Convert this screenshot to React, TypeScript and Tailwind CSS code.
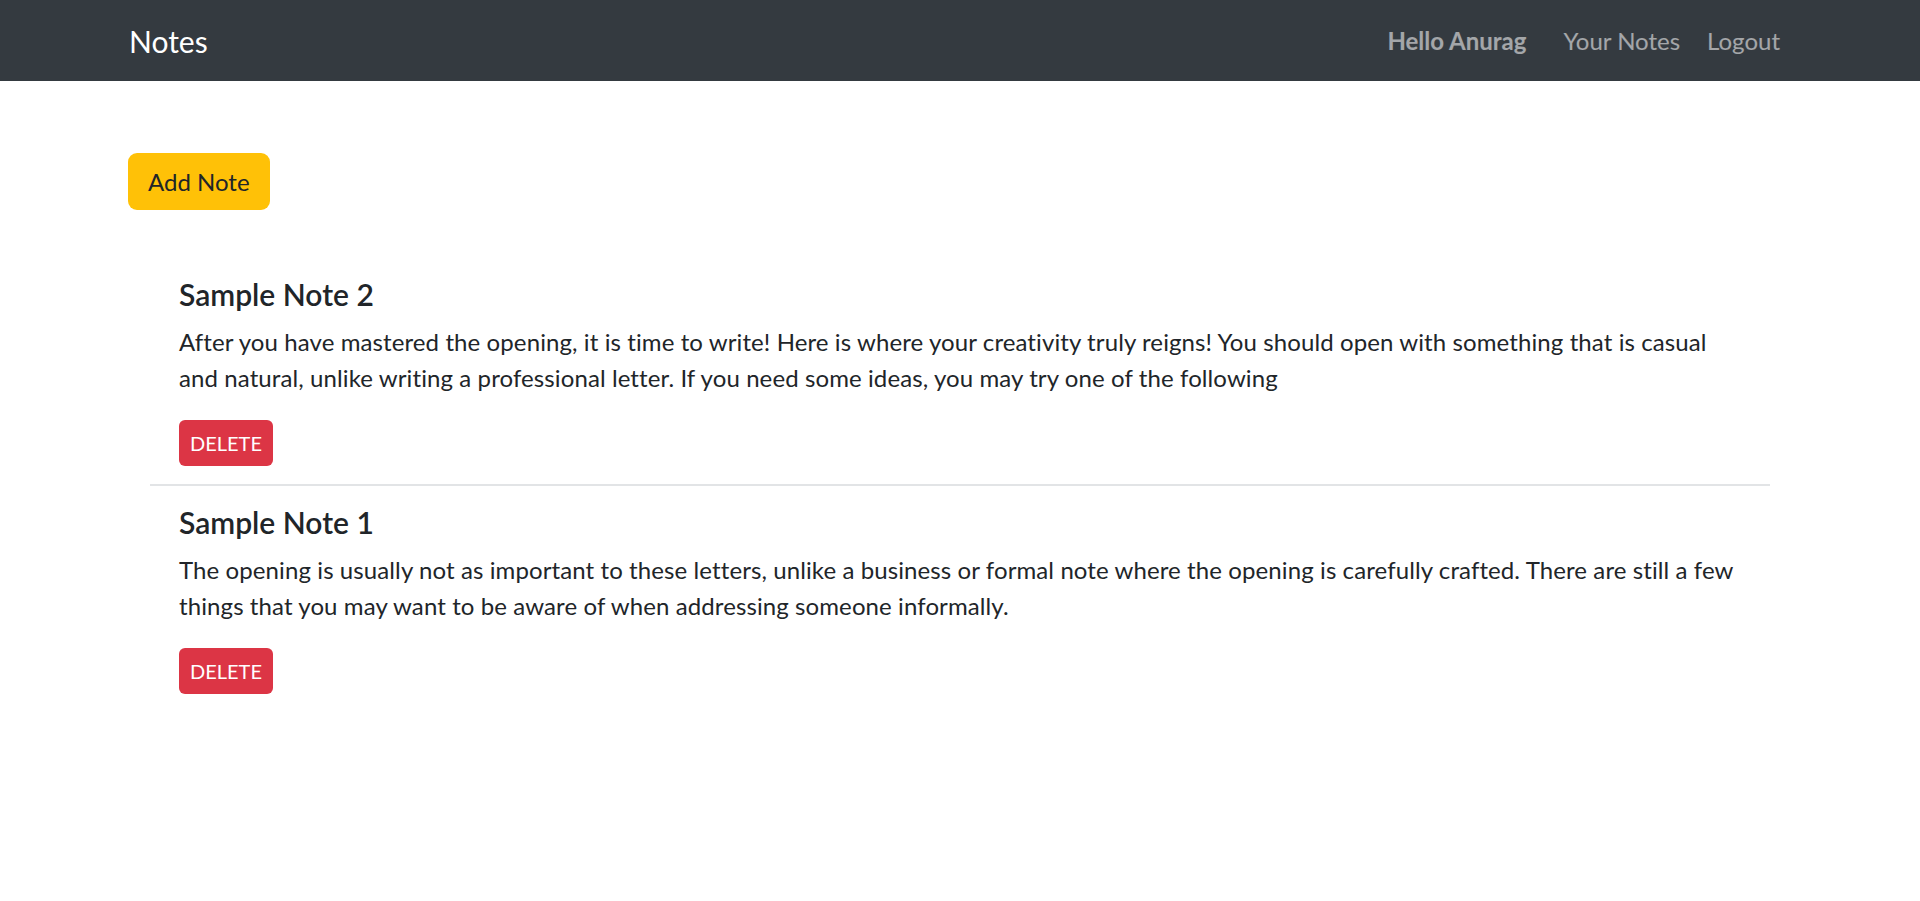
const notes = [
    {
        id: 2,
        title: "Sample Note 2",
        description:
            "After you have mastered the opening, it is time to write! Here is where your creativity truly reigns! You should open with something that is casual and natural, unlike writing a professional letter. If you need some ideas, you may try one of the following",
    },
    {
        id: 1,
        title: "Sample Note 1",
        description:
            "The opening is usually not as important to these letters, unlike a business or formal note where the opening is carefully crafted. There are still a few things that you may want to be aware of when addressing someone informally.",
    },
];

function Navbar() {
    return (
        <nav className="h-[81px] bg-[#343a40]">
            <div className="mx-[128px] h-full flex items-center justify-between">
                <a className="text-[30px] leading-[36px] text-white ml-px">Notes</a>
                <div className="flex items-center text-[24px] leading-[36px] text-white/55">
                    <span className="font-bold mr-[25px]">Hello Anurag</span>
                    <a className="px-3">Your Notes</a>
                    <a className="px-3 ml-[3px]">Logout</a>
                </div>
            </div>
        </nav>
    );
}

export default function App() {
    return (
        <div className="min-h-screen bg-white text-[#212529] font-['Lato','Liberation_Sans',sans-serif]">
            <Navbar />

            <main className="mx-[128px] pt-[72px]">
                <button className="h-[57px] px-[20px] rounded-[9px] bg-[#ffc107] text-[24px] leading-[36px] text-[#212529]">
                    Add Note
                </button>

                <div className="mt-[48px] mx-[22px]">
                    {notes.map((note, i) => (
                        <div
                            key={note.id}
                            className={
                                i < notes.length - 1
                                    ? "py-[18px] pl-[29px] pr-[26px] border-b-2 border-[#e2e4e6]"
                                    : "py-[18px] pl-[29px] pr-[26px]"
                            }
                        >
                            <h5 className="text-[30px] leading-[36px] font-semibold mb-[12px]">{note.title}</h5>
                            <p className="text-[24px] leading-[36px] tracking-[0.1px] mb-[24px]">{note.description}</p>
                            <button className="h-[46px] px-[11px] rounded-[6px] bg-[#dc3545] text-white text-[20px] leading-[32px] uppercase">
                                Delete
                            </button>
                        </div>
                    ))}
                </div>
            </main>
        </div>
    );
}
